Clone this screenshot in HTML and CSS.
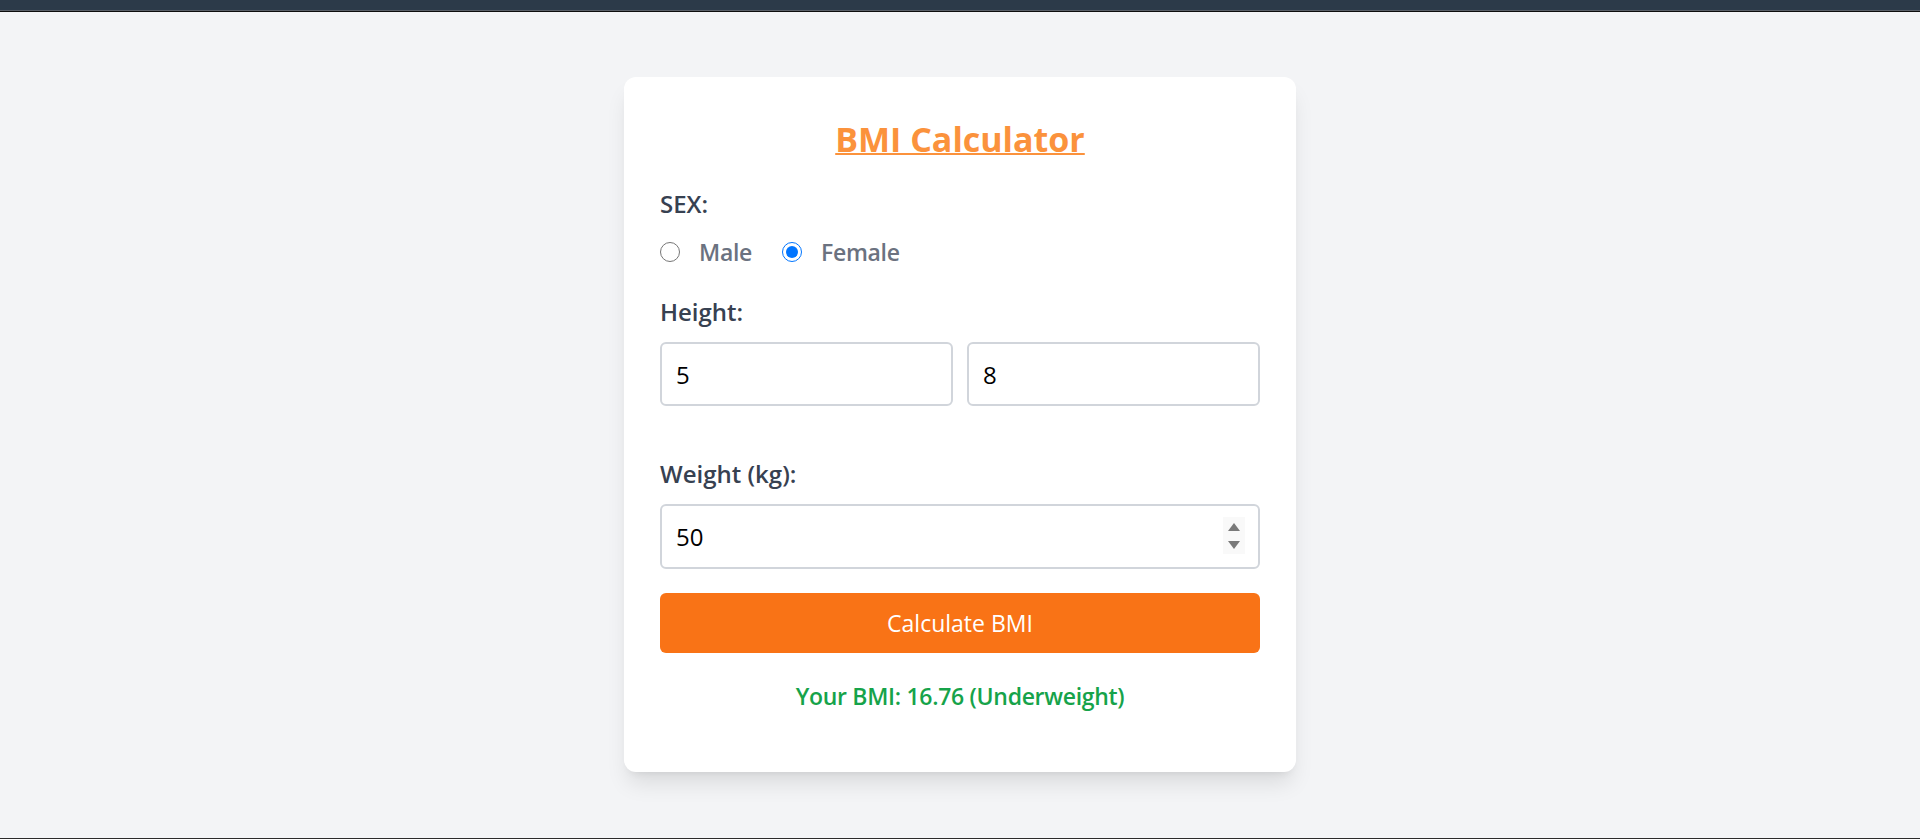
FILE: index.html
```html
<!DOCTYPE html>
<html lang="en">
<head>
<meta charset="utf-8">
<title>BMI Calculator</title>
<link rel="stylesheet" href="styles.css">
</head>
<body>
<div class="topbar"></div>
<main class="main">
  <div class="card">
    <h1 class="title">BMI Calculator</h1>
    <div class="group">
      <label class="label">SEX:</label>
      <div class="radios">
        <label class="radio-opt"><input type="radio" name="sex" class="radio"><span>Male</span></label>
        <label class="radio-opt"><input type="radio" name="sex" class="radio" checked><span>Female</span></label>
      </div>
    </div>
    <div class="group group-height">
      <label class="label">Height:</label>
      <div class="row">
        <input class="field" type="text" value="5">
        <input class="field" type="text" value="8">
      </div>
    </div>
    <div class="group">
      <label class="label">Weight (kg):</label>
      <div class="field-wrap">
        <input class="field field-weight" type="text" value="50">
        <div class="spinner">
          <span class="arrow up"></span>
          <span class="arrow down"></span>
        </div>
      </div>
    </div>
    <button class="btn" type="button">Calculate BMI</button>
    <p class="result">Your BMI: 16.76 (Underweight)</p>
  </div>
</main>
<div class="bottomline"></div>
</body>
</html>
```
FILE: styles.css
```css
* { box-sizing: border-box; }
html, body { margin: 0; padding: 0; }
body {
  height: 839px;
  display: flex;
  flex-direction: column;
  background: #f3f4f6;
  font-family: "Open Sans", "Noto Sans", sans-serif;
  color: #374151;
}
.topbar {
  height: 12px;
  background: #2c3a49;
  border-bottom: 1px solid #0d0d0d;
  box-shadow: inset 0 -1px 0 #5a6068;
}
.main {
  flex: 1;
  padding-top: 65px;
}
.bottomline {
  height: 1px;
  background: #2b2b2b;
}
.card {
  width: 672px;
  margin: 0 auto;
  background: #fff;
  border-radius: 12px;
  padding: 36px 36px 58px;
  box-shadow: 0 15px 22px -4px rgba(0,0,0,0.1), 0 6px 9px -6px rgba(0,0,0,0.1);
}
.title {
  margin: 0 0 23px;
  padding-top: 2px;
  text-align: center;
  font-size: 34px;
  line-height: 48px;
  font-weight: 700;
  color: #fb923c;
  text-decoration: underline;
  text-decoration-thickness: 2px;
}
.group { margin-bottom: 24px; }
.group-height { margin-bottom: 50px; }
.label {
  display: block;
  font-size: 24px;
  line-height: 36px;
  font-weight: 600;
  color: #374151;
  margin-bottom: 12px;
}
.radios {
  display: flex;
  align-items: center;
  height: 36px;
}
.radio-opt {
  display: flex;
  align-items: center;
  margin-right: 30px;
  font-size: 23px;
  line-height: 36px;
  font-weight: 600;
  letter-spacing: -0.3px;
  color: #6b7280;
}
.radio {
  width: 20px;
  height: 20px;
  margin: 0 19px 0 0;
}
.row {
  display: flex;
  gap: 14px;
}
.field {
  display: block;
  width: 100%;
  height: 64px;
  border: 2px solid #d1d5db;
  border-radius: 6px;
  padding: 0 14px;
  font-family: inherit;
  font-size: 24px;
  color: #000;
  background: #fff;
  outline: none;
}
.field-weight { height: 65px; }
.field-wrap { position: relative; }
.spinner {
  position: absolute;
  right: 15px;
  top: 13px;
  width: 22px;
  height: 37px;
  background: #f9f9f9;
  display: flex;
  flex-direction: column;
  align-items: center;
  justify-content: center;
  gap: 10px;
}
.arrow {
  width: 0;
  height: 0;
  border-left: 6px solid transparent;
  border-right: 6px solid transparent;
}
.arrow.up { border-bottom: 8px solid #7a7a7a; }
.arrow.down { border-top: 8px solid #7a7a7a; }
.btn {
  display: block;
  width: 100%;
  height: 60px;
  border: none;
  border-radius: 6px;
  background: #f97316;
  color: #fff;
  font-family: inherit;
  font-size: 23px;
  font-weight: 400;
  cursor: pointer;
}
.result {
  margin: 25px 0 0;
  text-align: center;
  font-size: 23px;
  line-height: 36px;
  font-weight: 600;
  letter-spacing: -0.3px;
  color: #16a34a;
}
```
